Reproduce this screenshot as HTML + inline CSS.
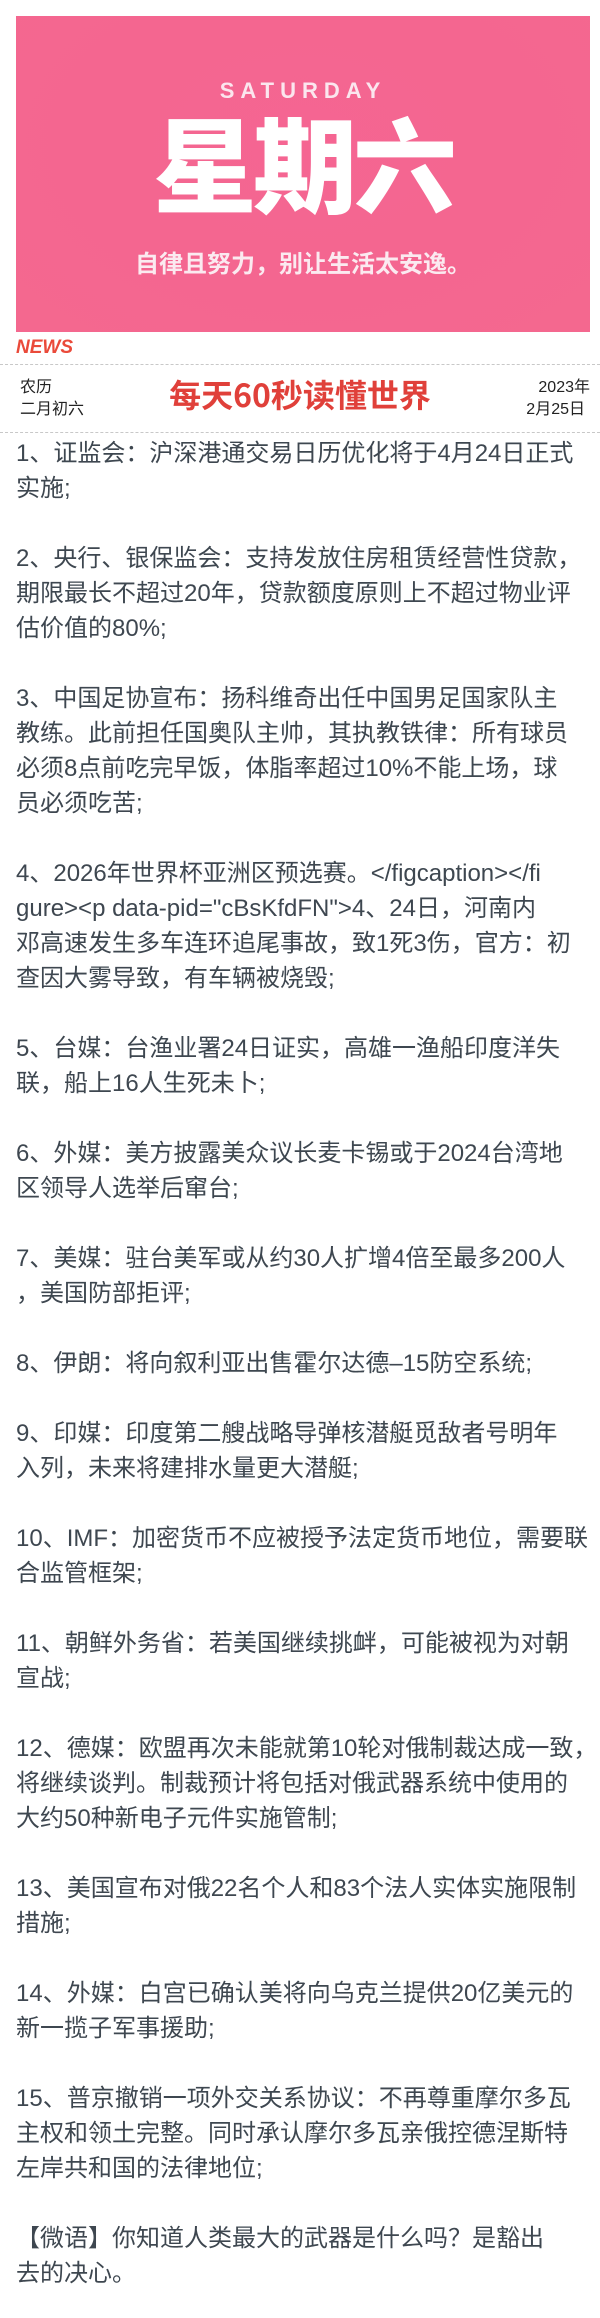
<!DOCTYPE html>
<html><head><meta charset="utf-8">
<style>
html,body{margin:0;padding:0;background:#fff;}
body{width:600px;height:2318px;position:relative;overflow:hidden;font-family:"Liberation Sans","Noto Sans CJK SC",sans-serif;}
.banner{position:absolute;left:16px;top:16px;width:574px;height:316px;background:radial-gradient(ellipse at 50% 40%,#f56592 0%,#f46690 50%,#f4688f 100%);overflow:hidden;}
.sat{position:absolute;left:0;right:0;top:62px;text-align:center;color:#fbe6ee;font-size:22px;font-weight:bold;letter-spacing:6px;}
.big{position:absolute;left:0;right:0;top:88px;text-align:center;color:#fff;font-size:104px;font-weight:900;line-height:112px;font-family:"Noto Sans CJK SC",sans-serif;letter-spacing:-4px;}
.tag{position:absolute;left:0;right:0;top:228px;text-align:center;color:#fbeaf0;font-size:24px;font-weight:bold;font-family:"Noto Sans CJK SC",sans-serif;}
.news{position:absolute;left:16px;top:337px;color:#ea4a3a;font-size:19px;font-weight:bold;font-style:italic;}
.dash{position:absolute;left:0;width:600px;border-top:1.5px dashed #c8c8c8;}
.sm{position:absolute;font-size:16px;color:#222;line-height:22px;font-family:"Liberation Sans","Noto Sans CJK SC",sans-serif;}
.title{position:absolute;left:0;right:0;top:374px;text-align:center;color:#e0403a;font-size:32px;font-weight:bold;font-family:"Noto Sans CJK SC",sans-serif;line-height:40px;}
.txt{position:absolute;left:16px;top:436px;font-size:24px;line-height:35px;color:#3e4750;white-space:nowrap;font-family:"Liberation Sans","Noto Sans CJK SC",sans-serif;}
</style></head><body>
<div class="banner">
<div class="sat">SATURDAY</div>
<div class="big">星期六</div>
<div class="tag">自律且努力，别让生活太安逸。</div>
</div>
<div class="news">NEWS</div>
<div class="dash" style="top:364px"></div>
<div class="sm" style="left:20px;top:377px">农历<br>二月初六</div>
<div class="title">每天60秒读懂世界</div>
<div class="sm" style="right:10px;top:377px;text-align:right">2023年<br><span style="margin-right:5px">2月25日</span></div>
<div class="dash" style="top:432px"></div>
<div class="txt">1、证监会：沪深港通交易日历优化将于4月24日正式<br>实施;<br><br>2、央行、银保监会：支持发放住房租赁经营性贷款，<br>期限最长不超过20年，贷款额度原则上不超过物业评<br>估价值的80%;<br><br>3、中国足协宣布：扬科维奇出任中国男足国家队主<br>教练。此前担任国奥队主帅，其执教铁律：所有球员<br>必须8点前吃完早饭，体脂率超过10%不能上场，球<br>员必须吃苦;<br><br>4、2026年世界杯亚洲区预选赛。&lt;/figcaption&gt;&lt;/fi<br>gure&gt;&lt;p data-pid="cBsKfdFN"&gt;4、24日，河南内<br>邓高速发生多车连环追尾事故，致1死3伤，官方：初<br>查因大雾导致，有车辆被烧毁;<br><br>5、台媒：台渔业署24日证实，高雄一渔船印度洋失<br>联，船上16人生死未卜;<br><br>6、外媒：美方披露美众议长麦卡锡或于2024台湾地<br>区领导人选举后窜台;<br><br>7、美媒：驻台美军或从约30人扩增4倍至最多200人<br>，美国防部拒评;<br><br>8、伊朗：将向叙利亚出售霍尔达德–15防空系统;<br><br>9、印媒：印度第二艘战略导弹核潜艇觅敌者号明年<br>入列，未来将建排水量更大潜艇;<br><br>10、IMF：加密货币不应被授予法定货币地位，需要联<br>合监管框架;<br><br>11、朝鲜外务省：若美国继续挑衅，可能被视为对朝<br>宣战;<br><br>12、德媒：欧盟再次未能就第10轮对俄制裁达成一致，<br>将继续谈判。制裁预计将包括对俄武器系统中使用的<br>大约50种新电子元件实施管制;<br><br>13、美国宣布对俄22名个人和83个法人实体实施限制<br>措施;<br><br>14、外媒：白宫已确认美将向乌克兰提供20亿美元的<br>新一揽子军事援助;<br><br>15、普京撤销一项外交关系协议：不再尊重摩尔多瓦<br>主权和领土完整。同时承认摩尔多瓦亲俄控德涅斯特<br>左岸共和国的法律地位;<br><br>【微语】你知道人类最大的武器是什么吗？是豁出<br>去的决心。</div>
</body></html>
